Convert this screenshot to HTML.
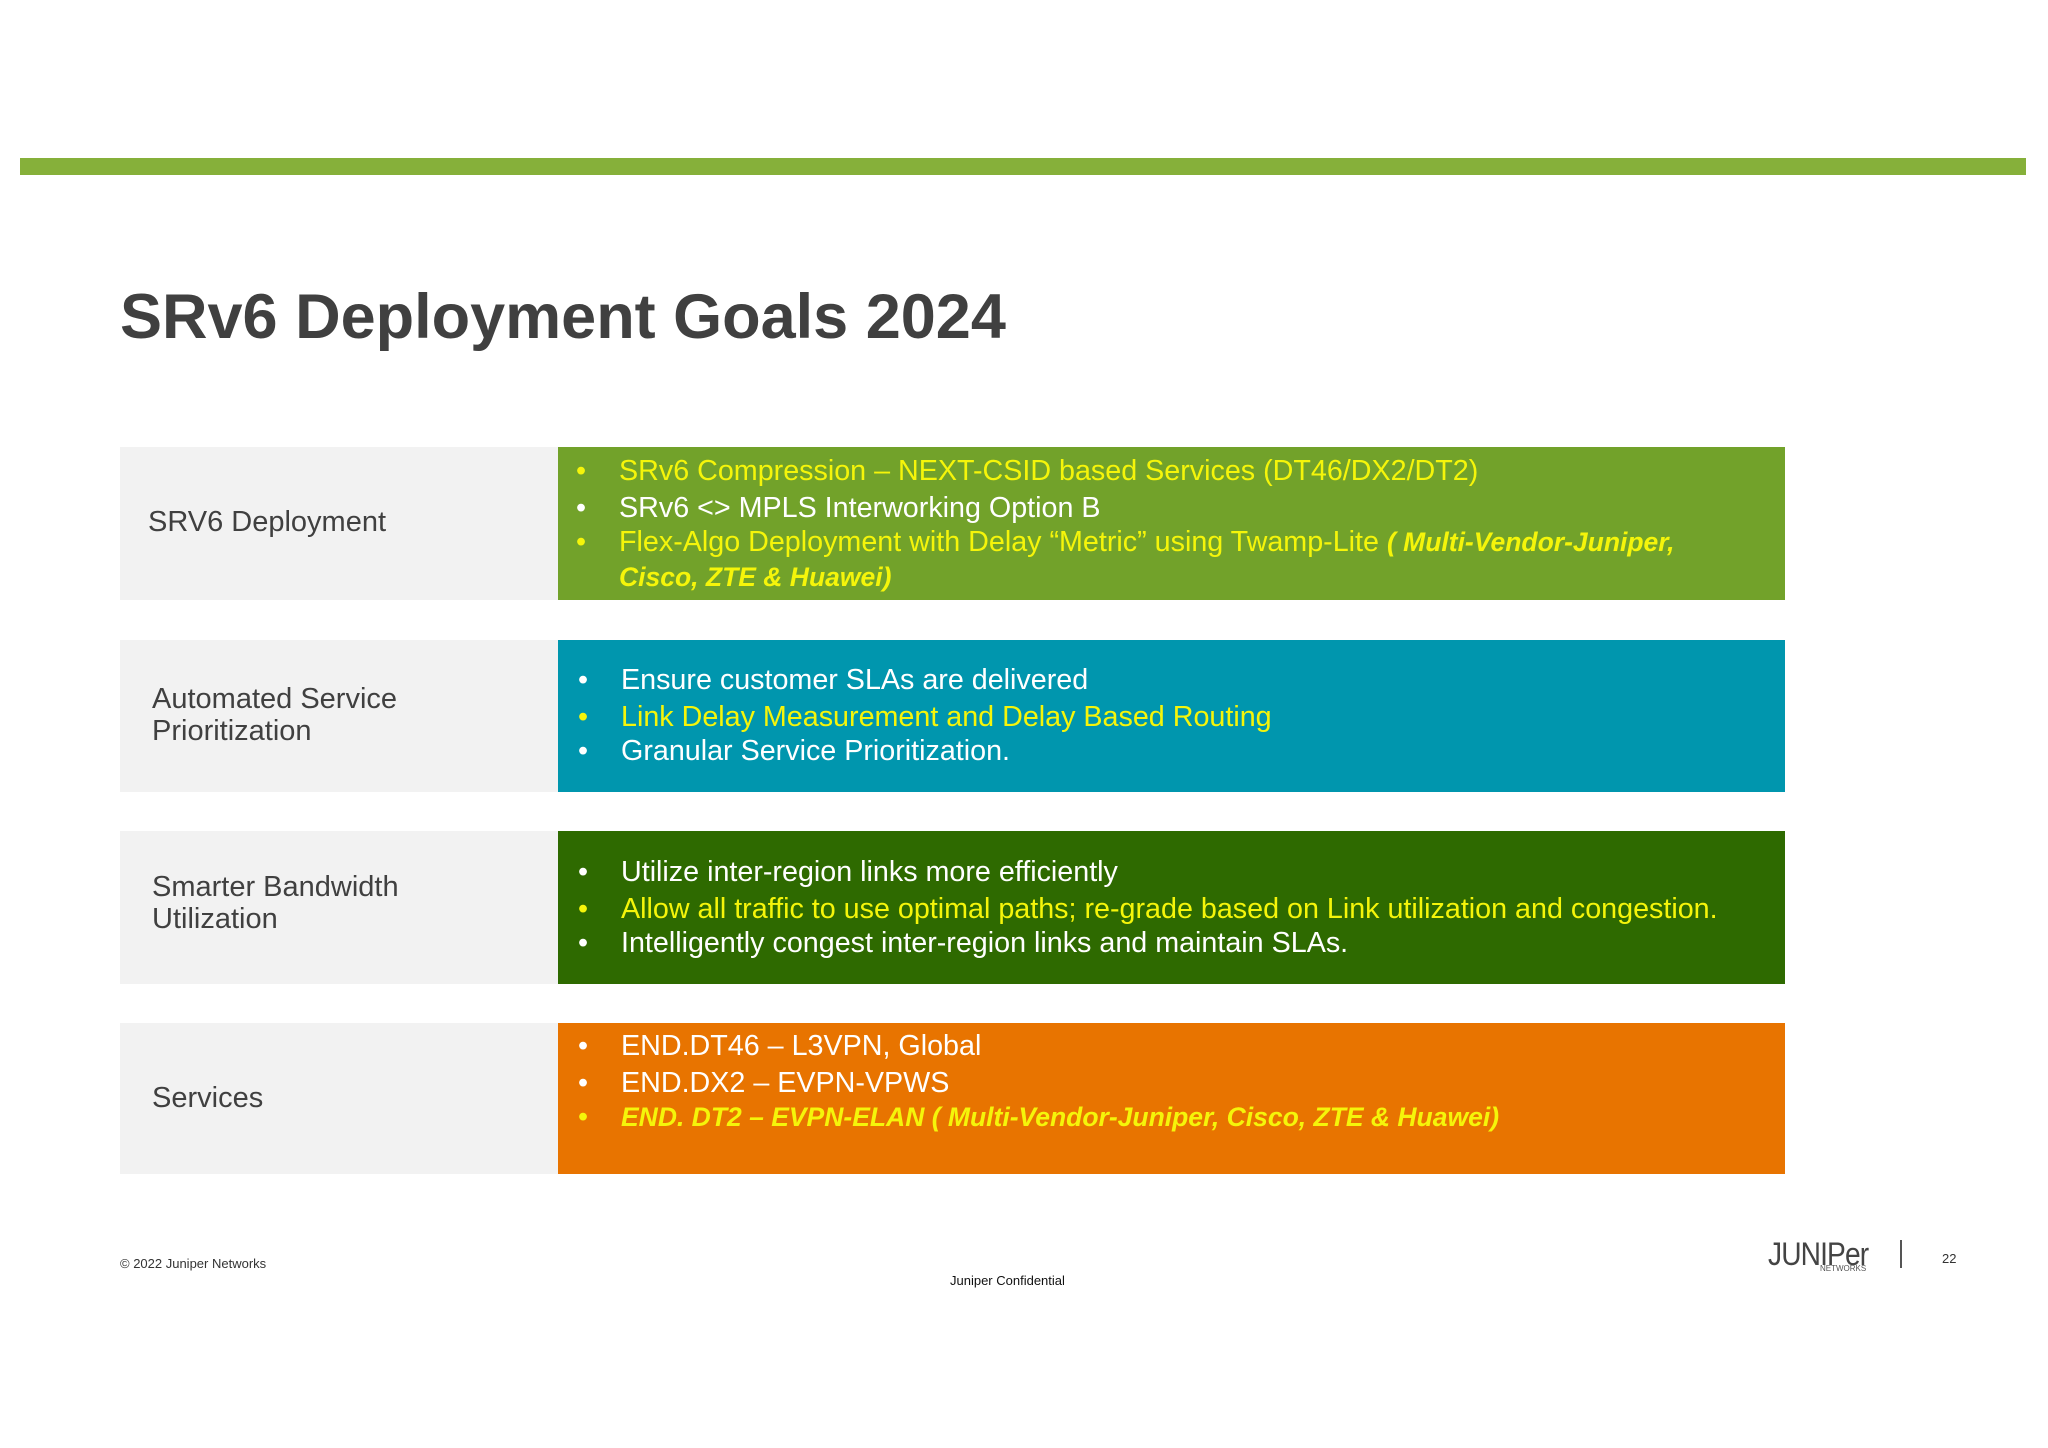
<!DOCTYPE html>
<html><head><meta charset="utf-8"><style>
body{margin:0;width:2048px;height:1448px;background:#fff;position:relative;overflow:hidden;font-family:"Liberation Sans",sans-serif}
div{position:absolute}
.bar{left:20px;top:158px;width:2006px;height:17px;background:#86b03a}
.title{left:120px;top:281px;font-size:63px;font-weight:bold;color:#404040;white-space:nowrap}
.lc{left:120px;width:438px;background:#f2f2f2}
.rc{left:558px;width:1227px}
.lab{font-size:29px;color:#404040;line-height:32px;white-space:nowrap}
.ln{font-size:28.7px;color:#fff;white-space:nowrap;line-height:34px}
.ln b{position:absolute;left:-43px;font-weight:normal}
.ln i{font-weight:bold;font-size:26.5px}
.y{color:#f5f50a}
</style></head><body>
<div class="bar"></div>
<div class="title">SRv6 Deployment Goals 2024</div>

<div class="lc" style="top:447px;height:153px"></div>
<div class="rc" style="top:447px;height:153px;background:#72a22a"></div>
<div class="lab" style="left:148px;top:506px">SRV6 Deployment</div>
<div class="ln y" style="left:619px;top:454px"><b>•</b>SRv6 Compression – NEXT-CSID based Services (DT46/DX2/DT2)</div>
<div class="ln" style="left:619px;top:491px"><b>•</b>SRv6 &lt;&gt; MPLS Interworking Option B</div>
<div class="ln y" style="left:619px;top:525px"><b>•</b>Flex-Algo Deployment with Delay “Metric” using Twamp-Lite <i>( Multi-Vendor-Juniper,</i></div>
<div class="ln y" style="left:619px;top:560px"><i>Cisco, ZTE &amp; Huawei)</i></div>

<div class="lc" style="top:640px;height:152px"></div>
<div class="rc" style="top:640px;height:152px;background:#0096ae"></div>
<div class="lab" style="left:152px;top:683px">Automated Service<br>Prioritization</div>
<div class="ln" style="left:621px;top:663px"><b>•</b>Ensure customer SLAs are delivered</div>
<div class="ln y" style="left:621px;top:700px"><b>•</b>Link Delay Measurement and Delay Based Routing</div>
<div class="ln" style="left:621px;top:734px"><b>•</b>Granular Service Prioritization.</div>

<div class="lc" style="top:831px;height:153px"></div>
<div class="rc" style="top:831px;height:153px;background:#2e6a00"></div>
<div class="lab" style="left:152px;top:871px">Smarter Bandwidth<br>Utilization</div>
<div class="ln" style="left:621px;top:855px"><b>•</b>Utilize inter-region links more efficiently</div>
<div class="ln y" style="left:621px;top:892px"><b>•</b>Allow all traffic to use optimal paths; re-grade based on Link utilization and congestion.</div>
<div class="ln" style="left:621px;top:926px"><b>•</b>Intelligently congest inter-region links and maintain SLAs.</div>

<div class="lc" style="top:1023px;height:151px"></div>
<div class="rc" style="top:1023px;height:151px;background:#e87400"></div>
<div class="lab" style="left:152px;top:1082px">Services</div>
<div class="ln" style="left:621px;top:1029px"><b>•</b>END.DT46 – L3VPN, Global</div>
<div class="ln" style="left:621px;top:1066px"><b>•</b>END.DX2 – EVPN-VPWS</div>
<div class="ln y" style="left:621px;top:1100px"><b>•</b><i>END. DT2 – EVPN-ELAN ( Multi-Vendor-Juniper, Cisco, ZTE &amp; Huawei)</i></div>

<div style="left:120px;top:1256px;font-size:13px;color:#333">© 2022 Juniper Networks</div>
<div style="left:950px;top:1273px;font-size:13px;color:#111">Juniper Confidential</div>
<div style="left:1768px;top:1236px;font-size:32px;color:#444;letter-spacing:-1px;transform:scaleX(0.88);transform-origin:left">JUNIPer</div>
<div style="left:1820px;top:1264px;font-size:8px;color:#555">NETWORKS</div>
<div style="left:1900px;top:1240px;width:2px;height:28px;background:#555"></div>
<div style="left:1942px;top:1251px;font-size:13px;color:#333">22</div>
</body></html>
